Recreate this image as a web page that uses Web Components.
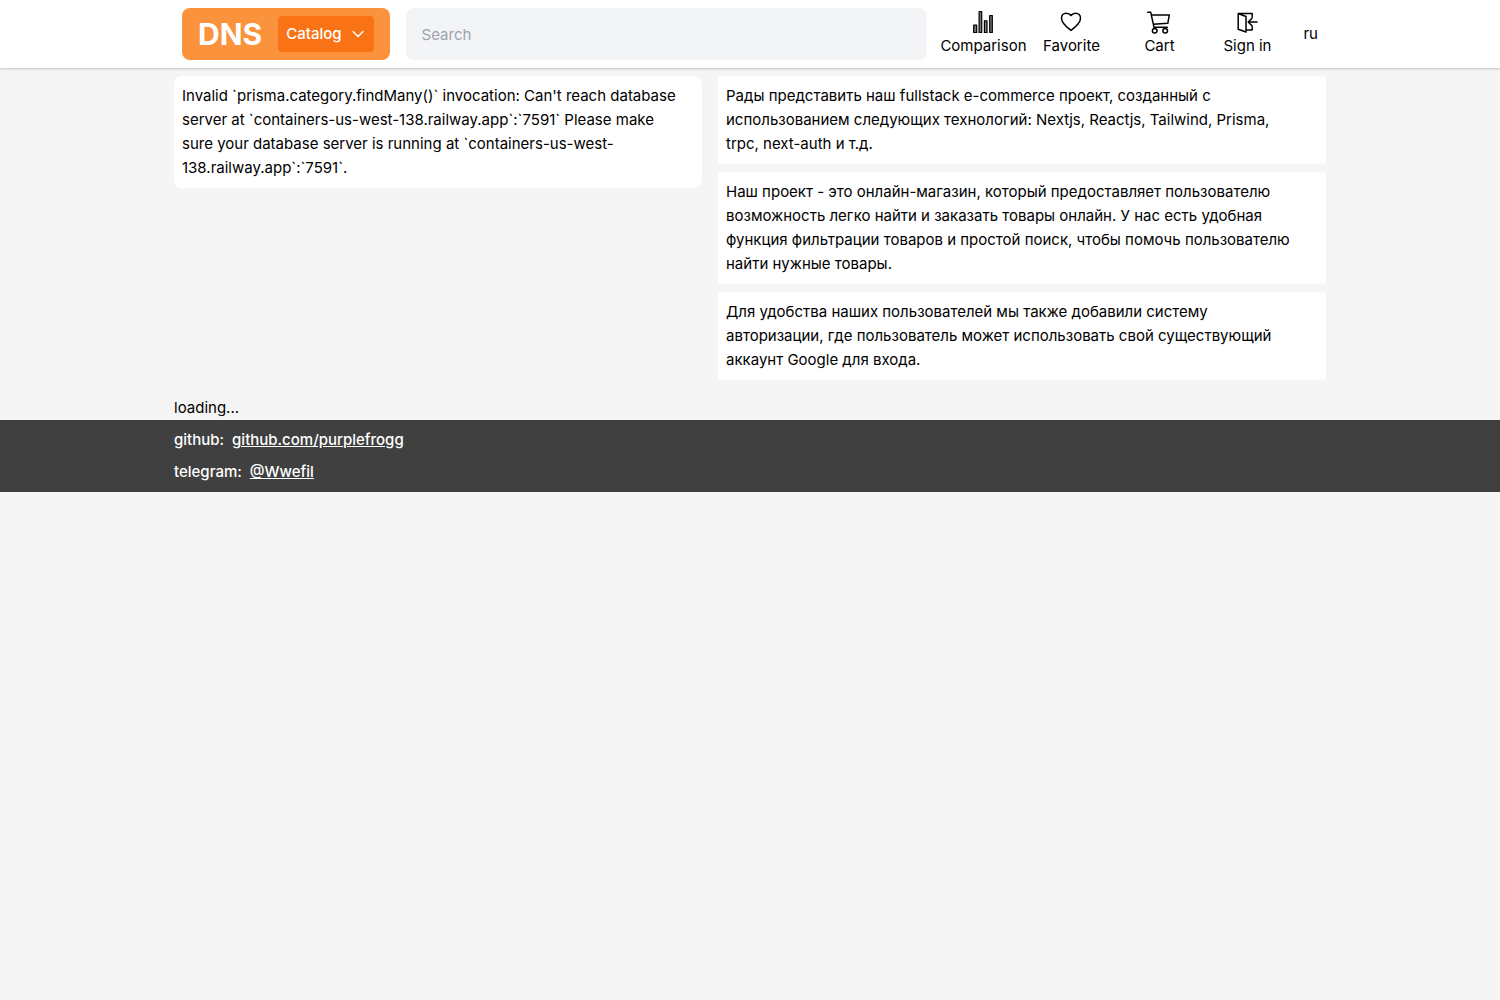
<!DOCTYPE html>
<html lang="en">
<head>
<meta charset="utf-8">
<meta name="viewport" content="width=device-width, initial-scale=1">
<title>DNS</title>
<style>
body { margin: 0; background: #f5f5f5; color: #000; font: 15px/24px Inter, "Liberation Sans", sans-serif; }
</style>
</head>
<body>
<shop-header>
  <catalog-bar slot="brand"></catalog-bar>
  <search-field slot="search"></search-field>
  <nav-action icon="comparison">Comparison</nav-action>
  <nav-action icon="favorite">Favorite</nav-action>
  <nav-action icon="cart">Cart</nav-action>
  <nav-action icon="signin">Sign in</nav-action>
  <span slot="locale">ru</span>
</shop-header>
<shop-main>
  <text-card large slot="categories">Invalid `prisma.category.findMany()` invocation: Can't reach database server at `containers-us-west-138.railway.app`:`7591` Please make sure your database server is running at `containers-us-west-138.railway.app`:`7591`.</text-card>
  <text-card>Рады представить наш fullstack e-commerce проект, созданный с использованием следующих технологий: Nextjs, Reactjs, Tailwind, Prisma, trpc, next-auth и т.д.</text-card>
  <text-card>Наш проект - это онлайн-магазин, который предоставляет пользователю возможность легко найти и заказать товары онлайн. У нас есть удобная функция фильтрации товаров и простой поиск, чтобы помочь пользователю найти нужные товары.</text-card>
  <text-card>Для удобства наших пользователей мы также добавили систему авторизации, где пользователь может использовать свой существующий аккаунт Google для входа.</text-card>
  <span slot="status">loading...</span>
</shop-main>
<shop-footer>
  <contact-link label="github:" href="https://github.com/purplefrogg">github.com/purplefrogg</contact-link>
  <contact-link label="telegram:" href="https://t.me/Wwefil">@Wwefil</contact-link>
</shop-footer>
<script>
const define = (name, html, setup) => customElements.define(name, class extends HTMLElement {
  connectedCallback() {
    if (this.shadowRoot) return;
    this.attachShadow({ mode: "open" }).innerHTML = `<style>*{box-sizing:border-box}</style>` + html;
    if (setup) setup(this, this.shadowRoot);
  }
});

define("shop-header", `<style>
:host { display: block; background: #fff; box-shadow: 0 1px 3px rgba(0,0,0,.1), 0 1px 2px rgba(0,0,0,.1); }
header { display: flex; align-items: center; gap: 12px; max-width: 1152px; margin: 0 auto; padding: 8px; }
.search { flex: 1; margin-left: 4px; }
nav { display: flex; }
</style><header><slot name="brand"></slot><div class="search"><slot name="search"></slot></div><nav><slot></slot></nav><slot name="locale"></slot></header>`);

define("catalog-bar", `<style>
:host { display: block; }
.bar { display: flex; align-items: center; gap: 16px; padding: 8px 16px; border-radius: 8px; background: #fb923c; color: #fff; }
.logo { color: inherit; text-decoration: none; font-size: 30px; line-height: 36px; font-weight: 700; }
button { display: flex; align-items: center; gap: 8px; padding: 6px 8px; border: 0; border-radius: 4px; background: #f97316; color: inherit; font: inherit; font-weight: 500; }
svg { display: block; width: 16px; height: 16px; }
</style><div class="bar"><a class="logo" href="#">DNS</a><button type="button">Catalog<svg viewBox="0 0 16 16" fill="none" stroke="currentColor" stroke-width="1.5" stroke-linecap="round" stroke-linejoin="round"><path d="M3 5.500l5 5 5-5"/></svg></button></div>`);

define("search-field", `<style>
:host { display: block; }
input { display: block; width: 100%; height: 52px; padding: 0 16px; border: 0; border-radius: 8px; background: #f3f4f6; color: inherit; font: inherit; }
input::placeholder { color: #9ca3af; opacity: 1; }
</style><input type="search" aria-label="Search" placeholder="Search">`);

const icons = {
  comparison: `<path d="M2.7 15.2h3v7.3h-3zM8.1 1.5h2.6v21H8.1zM13.4 10.8h2.6v11.7h-2.6zM18.7 5.5h2.6v17h-2.6z" fill="#777" stroke-width="1.2"/>`,
  favorite: `<path d="M12 20.5C9 18 2.5 13.6 2.5 8.3C2.5 5.3 4.5 3.2 7.2 3.2C9.3 3.2 11 4.1 12 5.5C13 4.1 14.7 3.2 16.8 3.2C19.5 3.2 21.5 5.3 21.5 8.3C21.5 13.6 15 18 12 20.5Z"/>`,
  cart: `<path d="M.7 2.2h3L7 17.3M4.4 5h17.9l-1.5 8.3L6.2 14.3M7 17.3h13.3"/><circle cx="7.7" cy="20.8" r="2.3"/><circle cx="18.2" cy="20.8" r="2.3"/>`,
  signin: `<path d="M3.2 3.5v15.8l7.8 2.7V6.5zM3.2 3.5h14v3.8M11 20h6.2v-3.600M22 12h-8.800M17 8.200L13.200 12l3.800 3.800"/>`
};
define("nav-action", `<style>
:host { display: block; width: 88px; }
a { display: flex; flex-direction: column; align-items: center; color: inherit; text-decoration: none; }
svg { display: block; width: 24px; height: 24px; }
</style><a href="#"><svg viewBox="0 0 24 24" fill="none" stroke="currentColor" stroke-width="1.5" stroke-linecap="round" stroke-linejoin="round" aria-hidden="true"></svg><span><slot></slot></span></a>`,
(host, root) => { root.querySelector("svg").innerHTML = icons[host.getAttribute("icon")]; });

define("shop-main", `<style>
:host { display: block; }
main { max-width: 1152px; margin: 0 auto; padding-top: 8px; }
.columns { display: grid; grid-template-columns: 33fr 38fr; gap: 16px; align-items: start; margin-bottom: 16px; }
.about { display: flex; flex-direction: column; gap: 8px; }
</style><main><div class="columns"><slot name="categories"></slot><div class="about"><slot></slot></div></div><slot name="status"></slot></main>`);

define("text-card", `<style>
:host { display: block; padding: 8px 24px 8px 8px; border-radius: 4px; background: #fff; box-sizing: border-box; }
:host([large]) { border-radius: 8px; }
p { margin: 0; }
</style><p><slot></slot></p>`);

define("shop-footer", `<style>
:host { display: block; background: #404040; color: #fff; }
footer { display: flex; flex-direction: column; gap: 8px; max-width: 1152px; margin: 0 auto; padding: 8px 0; }
</style><footer><slot></slot></footer>`);

define("contact-link", `<style>
:host { display: flex; gap: 8px; font-weight: 500; }
a { color: inherit; text-decoration: underline; }
</style><span></span><a><slot></slot></a>`,
(host, root) => {
  root.querySelector("span").textContent = host.getAttribute("label");
  root.querySelector("a").href = host.getAttribute("href");
});
</script>
</body>
</html>
